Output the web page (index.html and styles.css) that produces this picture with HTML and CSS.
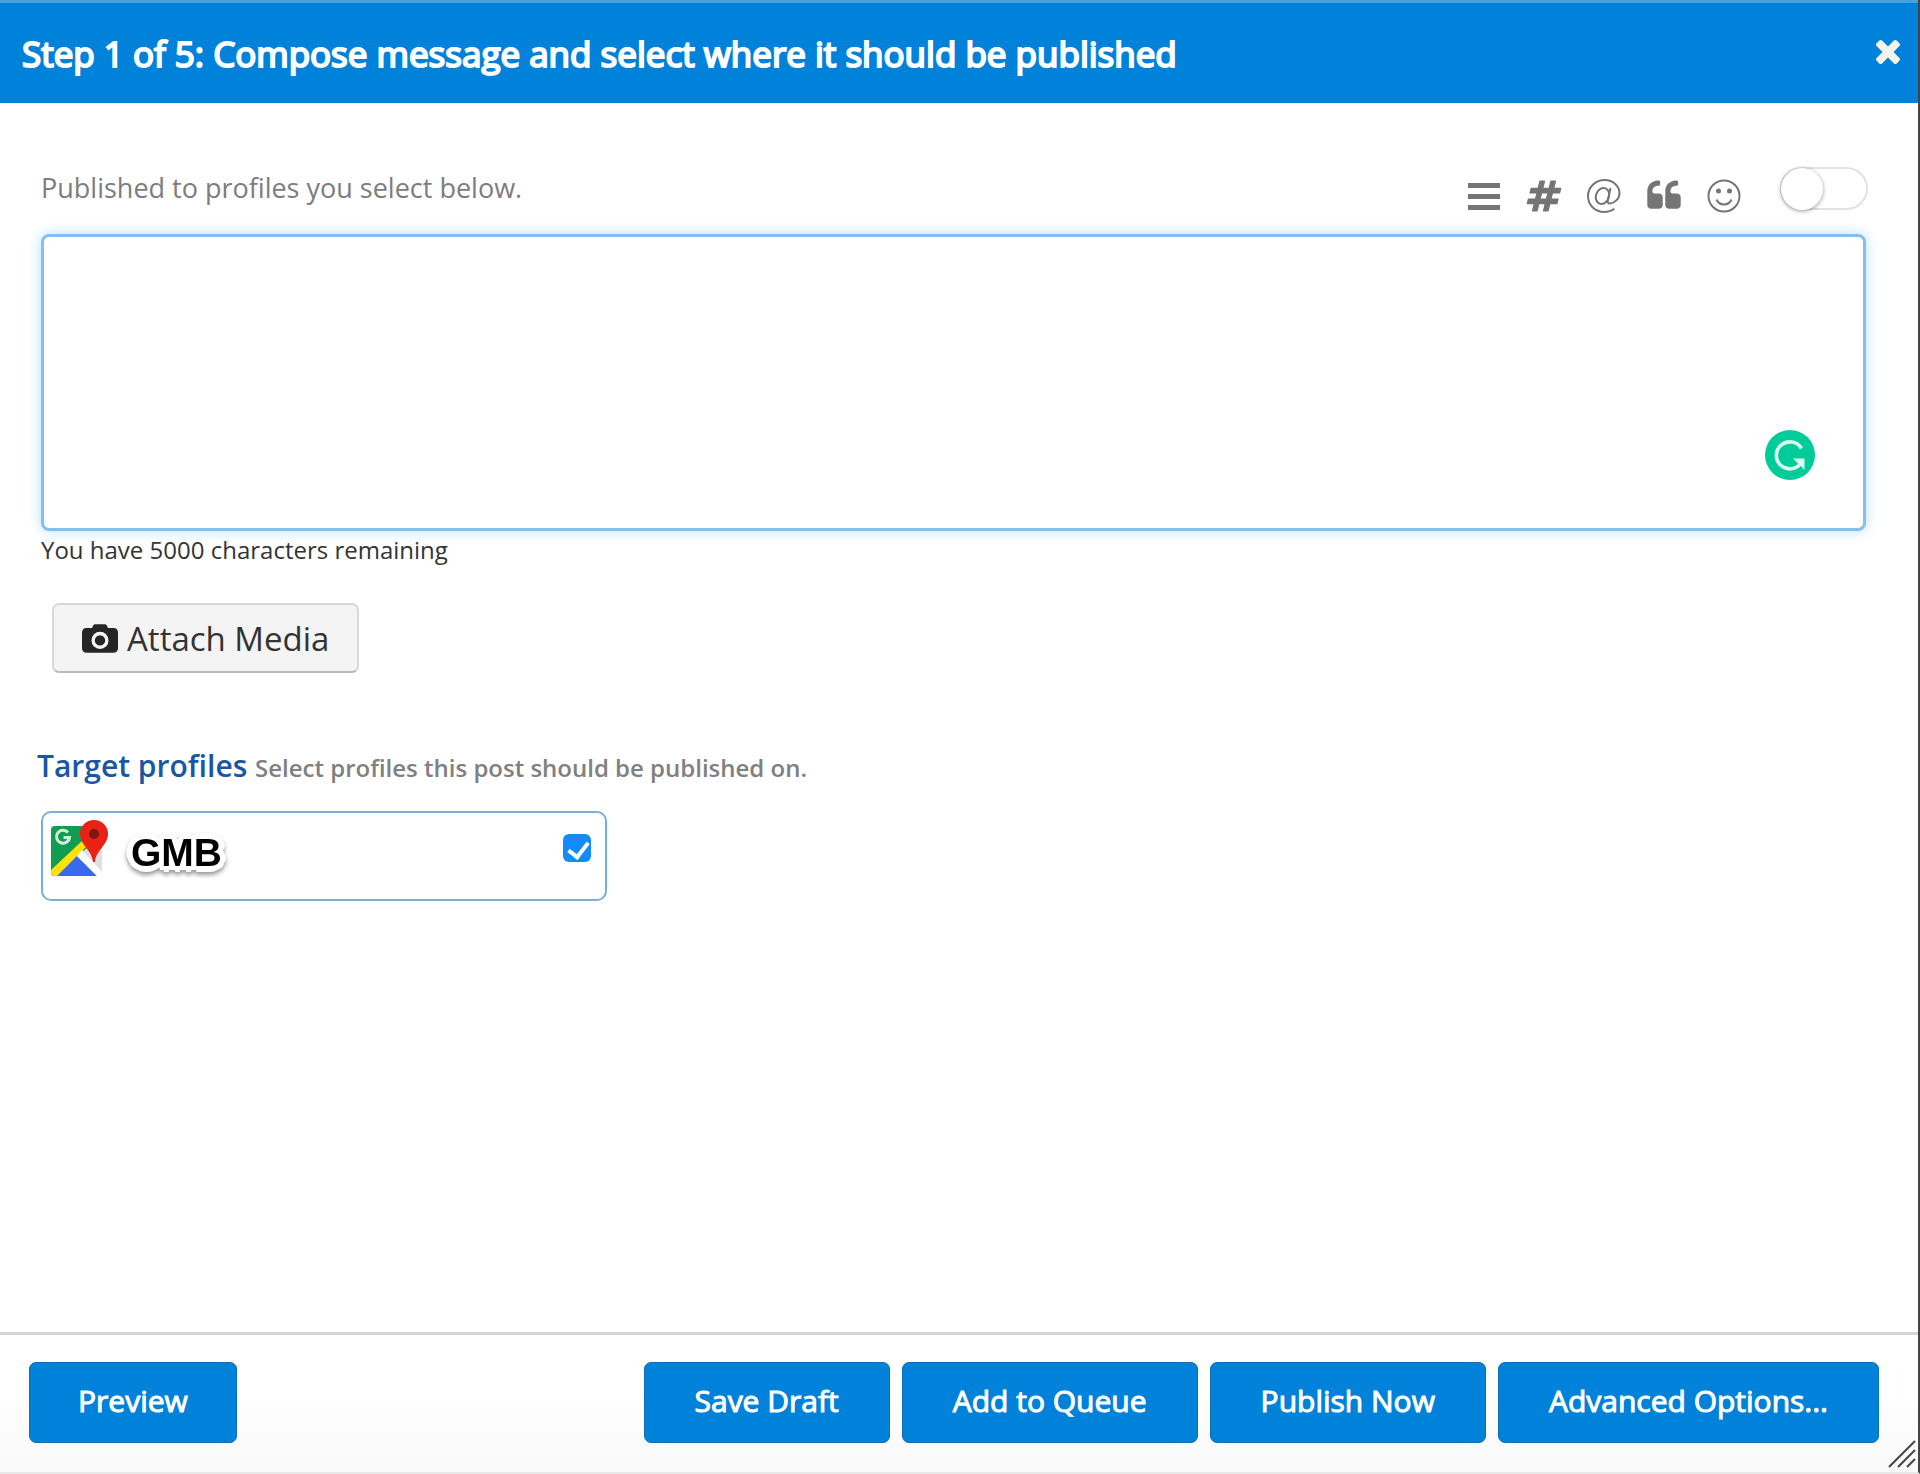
FILE: index.html
```html
<!DOCTYPE html>
<html lang="en">
<head>
    <meta charset="UTF-8">
    <meta name="viewport" content="width=device-width, initial-scale=1.0">
    <title>Compose message</title>
    <link rel="stylesheet" href="styles.css">
</head>
<body>
    <div class="dialog">
        <!-- Title Bar -->
        <header>
            <h1>Step 1 of 5: Compose message and select where it should be published</h1>
            <button type="button" class="close-btn" aria-label="Close">
                <svg viewBox="302 238 1188 1188"><path d="M1490 1322q0 40-28 68l-136 136q-28 28-68 28t-68-28l-294-294-294 294q-28 28-68 28t-68-28l-136-136q-28-28-28-68t28-68l294-294-294-294q-28-28-28-68t28-68l136-136q28-28 68-28t68 28l294 294 294-294q28-28 68-28t68 28l136 136q28 28 28 68t-28 68l-294 294 294 294q28 28 28 68z" transform="translate(0 -128)"/></svg>
            </button>
        </header>

        <main>
            <!-- Message -->
            <div class="compose-bar">
                <label for="message">Published to profiles you select below.</label>
                <div class="tools">
                    <button type="button" aria-label="Lists">
                        <svg viewBox="0 0 36 36"><path d="M2 5h32v5H2zM2 16h32v5H2zM2 27h32v5H2z"/></svg>
                    </button>
                    <button type="button" aria-label="Hashtags">
                        <svg viewBox="0 0 1792 1792"><path d="M991 1024l64-256h-254l-64 256h254zm768-504l-56 224q-7 24-31 24h-327l-64 256h311q15 0 25 12 10 14 6 28l-56 224q-5 24-31 24h-327l-81 328q-7 24-31 24h-224q-16 0-26-12-9-12-6-28l78-312h-254l-81 328q-7 24-31 24h-225q-15 0-25-12-9-12-6-28l78-312h-311q-15 0-25-12-9-12-6-28l56-224q7-24 31-24h327l64-256h-311q-15 0-25-12-10-14-6-28l56-224q5-24 31-24h327l81-328q7-24 32-24h224q15 0 25 12 9 12 6 28l-78 312h254l81-328q7-24 32-24h224q15 0 25 12 9 12 6 28l-78 312h311q15 0 25 12 9 12 6 28z"/></svg>
                    </button>
                    <button type="button" aria-label="Mentions">
                        <svg class="line" viewBox="0 0 36 36"><ellipse cx="16.500" cy="18" rx="6.500" ry="8.200" transform="rotate(22 16.500 18)"/><path d="M24.500 10l-2.700 12.200c-.5 2.400.6 3.400 2.200 3.200 5-.7 9.500-4.700 9.500-10.200C33.500 8 27 2 18.800 2 9.500 2 2 9.200 2 18s6.800 16 16.200 16c3.800 0 7.500-1.100 10.100-3.200"/></svg>
                    </button>
                    <button type="button" aria-label="Quotes">
                        <svg viewBox="0 128 1792 1536"><path d="M832 960v384q0 80-56 136t-136 56h-384q-80 0-136-56t-56-136v-704q0-104 40.500-198.500t109.500-163.500 163.500-109.500 198.500-40.500h64q26 0 45 19t19 45v128q0 26-19 45t-45 19h-64q-106 0-181 75t-75 181v32q0 40 28 68t68 28h224q80 0 136 56t56 136zm896 0v384q0 80-56 136t-136 56h-384q-80 0-136-56t-56-136v-704q0-104 40.500-198.500t109.500-163.500 163.500-109.500 198.500-40.500h64q26 0 45 19t19 45v128q0 26-19 45t-45 19h-64q-106 0-181 75t-75 181v32q0 40 28 68t68 28h224q80 0 136 56t56 136z"/></svg>
                    </button>
                    <button type="button" aria-label="Emoji">
                        <svg class="line" viewBox="0 0 36 36"><circle cx="18" cy="18" r="15.500"/><path d="M10.500 21.500c1.500 3.500 4.200 5 7.500 5s6-1.500 7.500-5"/><circle class="eye" cx="12.500" cy="13" r="2.500"/><circle class="eye" cx="23.500" cy="13" r="2.500"/></svg>
                    </button>
                    <input type="checkbox" class="switch" aria-label="Customize message">
                </div>
            </div>
            <div class="message-box">
                <textarea id="message"></textarea>
                <svg class="grammar-badge" viewBox="0 0 50 50"><circle cx="25" cy="25" r="25" fill="#0c9"/><path d="M36.500 18.500A13.500 13.500 0 1 0 36 33" fill="none" stroke="#d9fbf0" stroke-width="3.600"/><path d="M28 28.500h11.500V40l-3.800-4.200-3.600-3z" fill="#d9fbf0"/></svg>
            </div>
            <p class="remaining">You have 5000 characters remaining</p>

            <button type="button" class="attach-btn">
                <svg viewBox="0 0 38 30"><path fill-rule="evenodd" d="M5 4h5.500l1.500-3q.5-1 2-1h10q1.500 0 2 1l1.500 3H33q5 0 5 5v16q0 5-5 5H5q-5 0-5-5V9q0-5 5-5zm14 4a9 9 0 1 0 0 18 9 9 0 0 0 0-18z"/><circle cx="19" cy="17" r="5.500"/></svg>
                Attach Media
            </button>

            <!-- Profiles -->
            <h2>Target profiles <small>Select profiles this post should be published on.</small></h2>
            <label class="profile">
                <svg viewBox="0 0 57 56">
                    <rect x="0" y="6" width="51" height="50" rx="4" fill="#e0e0e0"/>
                    <path d="M4 6h32v22L3 56q-3 0-3-4V10q0-4 4-4z" fill="#109d4f"/>
                    <path d="M0 50L31 21l4 6L7 56H4q-4 0-4-4z" fill="#fde204"/>
                    <path d="M6 56l20-20 20 20z" fill="#3969ee"/>
                    <path d="M26 36l5-6 20 22q0 4-4 4h-1z" fill="#fff"/>
                    <path d="M17 12.500a6.500 6.500 0 1 0 1.500 5h-6" fill="none" stroke="#cfeedd" stroke-width="3"/>
                    <path d="M43 0a14 14 0 0 0-14 14c0 11 12 16 13 28h2c1-12 13-17 13-28A14 14 0 0 0 43 0z" fill="#ea2216"/>
                    <circle cx="43" cy="14" r="5" fill="#7d170f"/>
                </svg>
                <span>GMB</span>
                <input type="checkbox" checked>
            </label>
        </main>

        <!-- Actions -->
        <footer>
            <button type="button" class="btn preview-btn">Preview</button>
            <button type="button" class="btn">Save Draft</button>
            <button type="button" class="btn">Add to Queue</button>
            <button type="button" class="btn">Publish Now</button>
            <button type="button" class="btn">Advanced Options...</button>
            <svg class="grip" viewBox="0 0 28 28"><path d="M1 27L27 1M10 27L27 10M19 27l8-8"/></svg>
        </footer>
    </div>
</body>
</html>
```
FILE: styles.css
```css
/* General Reset */
* {
    margin: 0;
    padding: 0;
    box-sizing: border-box;
    font-family: "Open Sans", sans-serif;
}

body {
    background-color: #fff;
}

button {
    border: none;
    background: none;
    cursor: pointer;
}

svg {
    display: block;
}

.dialog {
    min-height: 100vh;
    display: flex;
    flex-direction: column;
    border-right: 2px solid #444;
    border-bottom: 2px solid #e8e8e8;
}

/* Title Bar */
header {
    background-color: #0082da;
    border-top: 3px solid #46a1dc;
    padding: 26px 18px 24px 22px;
    display: flex;
    justify-content: space-between;
    align-items: flex-start;
}

h1 {
    color: #fff;
    font-size: 35px;
    line-height: 50px;
    font-weight: 400;
    -webkit-text-stroke: 2px #fff;
}

.close-btn {
    padding-top: 11px;
}

.close-btn svg {
    width: 24px;
    height: 24px;
    fill: #f4f4ea;
}

/* Message */
main {
    flex: 1;
    padding: 60px 52px 40px 41px;
}

.compose-bar {
    display: flex;
    justify-content: space-between;
    align-items: flex-start;
    height: 71px;
}

.compose-bar label {
    color: #7d7d7d;
    font-size: 27px;
    line-height: 50px;
}

.tools {
    display: flex;
    gap: 24px;
    margin-right: -2px;
    padding-top: 4px;
}

.tools button {
    padding-top: 11px;
}

.tools svg {
    width: 36px;
    height: 36px;
    fill: #757575;
}

.tools .line {
    fill: none;
    stroke: #757575;
    stroke-width: 2;
}

.tools .eye {
    fill: #757575;
    stroke: none;
}

.switch {
    appearance: none;
    width: 88px;
    height: 43px;
    margin-left: 14px;
    border: 2px solid #e2e2e2;
    border-radius: 22px;
}

.switch::before {
    content: "";
    display: block;
    width: 42px;
    height: 42px;
    margin: -1px;
    border-radius: 50%;
    background-color: #fff;
    box-shadow: 0 1px 4px rgba(0, 0, 0, 0.4);
}

.message-box {
    position: relative;
}

textarea {
    display: block;
    width: 100%;
    height: 297px;
    padding: 12px;
    border: 3px solid #85bff0;
    border-radius: 8px;
    box-shadow: 0 0 14px #b5e0fa;
    font-size: 27px;
    resize: none;
    outline: none;
}

.grammar-badge {
    position: absolute;
    right: 51px;
    bottom: 51px;
    width: 50px;
    height: 50px;
}

.remaining {
    color: #333;
    font-size: 24px;
    line-height: 38px;
}

.attach-btn {
    display: flex;
    align-items: center;
    gap: 9px;
    height: 70px;
    margin: 34px 11px 71px;
    padding: 0 28px;
    border: 2px solid #d8d8d8;
    border-bottom-color: #bbb;
    border-radius: 7px;
    background-color: #f4f4f4;
    color: #333;
    font-size: 33px;
}

.attach-btn svg {
    width: 36px;
    height: 29px;
    fill: #252525;
}

/* Profiles */
h2 {
    margin-left: -4px;
    color: #1857a4;
    font-size: 30px;
    line-height: 44px;
    font-weight: 600;
}

h2 small {
    color: #808080;
    font-size: 24px;
}

.profile {
    display: flex;
    align-items: flex-start;
    width: 566px;
    height: 90px;
    margin-top: 21px;
    padding: 7px 14px 0 8px;
    border: 2px solid #78afdb;
    border-radius: 10px;
}

.profile svg {
    width: 57px;
    height: 56px;
}

.profile span {
    flex: 1;
    margin: 10px 0 0 23px;
    font: bold 39px/46px "Liberation Sans", sans-serif;
    color: #000;
    text-shadow: 6px 0 #fff, -6px 0 #fff, 0 6px #fff, 0 -6px #fff,
        4px 4px #fff, -4px 4px #fff, 4px -4px #fff, -4px -4px #fff;
    filter: drop-shadow(0 3px 2px rgba(0, 0, 0, 0.4));
}

.profile input {
    appearance: none;
    width: 28px;
    height: 28px;
    margin-top: 14px;
    border-radius: 6px;
    background-color: #148aff;
}

.profile input:checked::before {
    content: "";
    display: block;
    width: 9px;
    height: 16px;
    margin: 4px 9px;
    border: solid #fff;
    border-width: 0 4px 4px 0;
    transform: rotate(38deg);
}

/* Actions */
footer {
    position: relative;
    display: flex;
    gap: 12px;
    padding: 27px 39px 29px 29px;
    border-top: 3px solid #d5d5d5;
    background: linear-gradient(#fff 40%, #f9f9f9);
}

.btn {
    height: 81px;
    padding: 0 50px 5px;
    border: 1px solid #0d6fb8;
    border-radius: 7px;
    background-color: #0082da;
    color: #fff;
    font-size: 30px;
    -webkit-text-stroke: 1px #fff;
}

.preview-btn {
    margin-right: auto;
    padding: 0 48px 5px;
}

.grip {
    position: absolute;
    right: 2px;
    bottom: 4px;
    width: 28px;
    height: 28px;
    fill: none;
    stroke: #444;
    stroke-width: 2;
}
```
